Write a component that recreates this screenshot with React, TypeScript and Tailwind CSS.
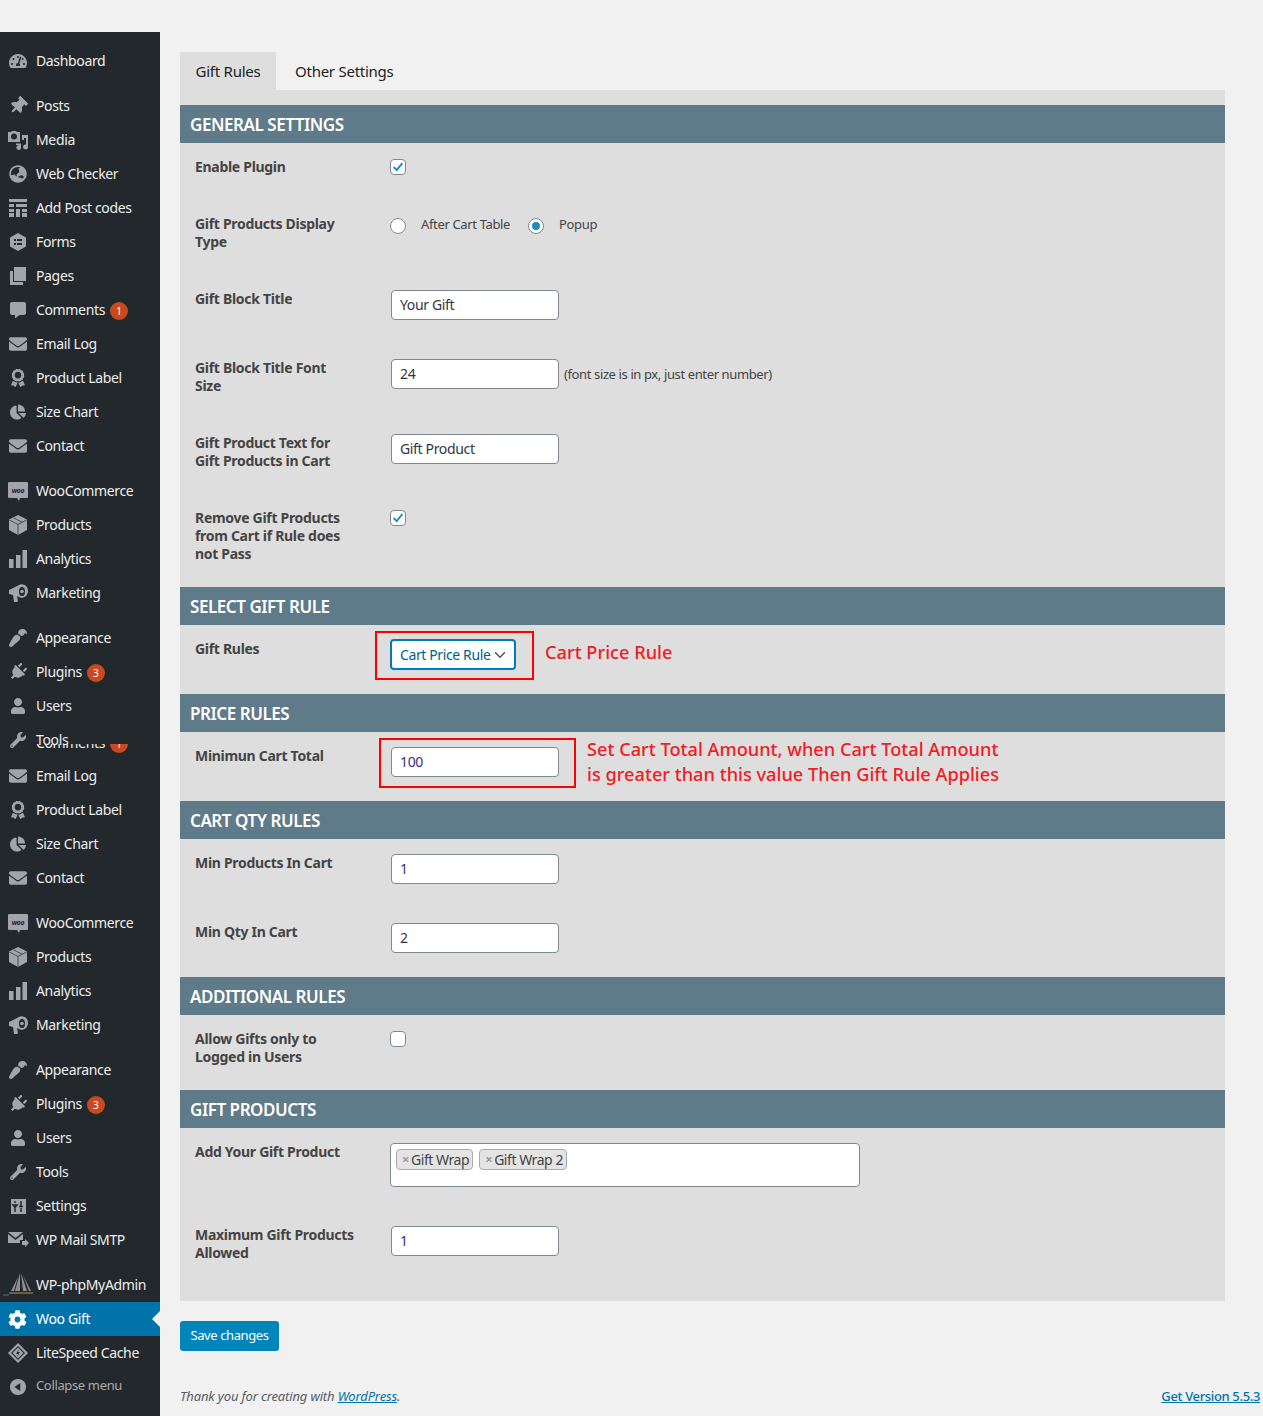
import type { ReactNode } from "react";
import {
  FaTachometerAlt,
  FaThumbtack,
  FaGlobeAsia,
  FaCommentAlt,
  FaEnvelope,
  FaAward,
  FaChartPie,
  FaPaintBrush,
  FaPlug,
  FaUser,
  FaWrench,
  FaCog,
} from "react-icons/fa";
import { ChevronDown } from "lucide-react";

const font = "font-['Noto_Sans','Open_Sans',sans-serif]";

// icons the packages don't have
function MediaIcon() {
  return (
    <svg viewBox="0 0 20 20" className="h-[20px] w-[20px] fill-current">
      <path fillRule="evenodd" d="M0 2h3l1-1h4l1 1h3v10H0zM6 3.500a3 3 0 1 0 0 6 3 3 0 0 0 0-6z" />
      <path d="M14 5h6v12a2.500 2.500 0 1 1-2-2.400V8h-2v2h-2zM8 13.500h5v4a2.300 2.300 0 1 1-2-2.200v-.3H8z" />
    </svg>
  );
}
function TableIcon() {
  return (
    <svg viewBox="0 0 20 20" className="h-[20px] w-[20px] fill-current">
      <path d="M1 1h18v3H1zM1 6h5v3H1zM8 6h11v3H8zM1 11h5v3H1zM1 15h5v4H1zM8 11h4v8H8zM14 11h5v3h-5zM14 15h5v4h-5z" />
    </svg>
  );
}
function FormsIcon() {
  return (
    <svg viewBox="0 0 20 20" className="h-[20px] w-[20px]">
      <path d="M10 1l8 4.500v9L10 19l-8-4.500v-9z" className="fill-current" />
      <path d="M6 7h2v2H6zM9 7h5v2H9zM6 11h2v2H6zM9 11h5v2H9z" fill="#23282d" />
    </svg>
  );
}
function PagesIcon() {
  return (
    <svg viewBox="0 0 20 20" className="h-[20px] w-[20px] fill-current">
      <path d="M6 1h12v14H6z" />
      <path d="M2 5h3v11h10v3H2z" />
    </svg>
  );
}
function WooIcon() {
  return (
    <svg viewBox="0 0 20 20" className="h-[20px] w-[20px]">
      <path d="M1 1h18a1 1 0 0 1 1 1v14a1 1 0 0 1-1 1h-7l-1 3-2-3H1a1 1 0 0 1-1-1V2a1 1 0 0 1 1-1z" className="fill-current" />
      <text x="10" y="11.500" textAnchor="middle" fontSize="7" fontWeight="700" fill="#23282d" fontStyle="italic">
        woo
      </text>
    </svg>
  );
}
function BoxIcon() {
  return (
    <svg viewBox="0 0 20 20" className="h-[20px] w-[20px]">
      <path d="M10 0l9 4.500v10.500L10 20l-9-5V4.500z" className="fill-current" />
      <path d="M1.500 5l8.500 4.500L18.500 5M10 9.500V20M5.500 2.800l8.500 4.400" fill="none" stroke="#23282d" strokeWidth="0.7" />
    </svg>
  );
}
function BarsIcon() {
  return (
    <svg viewBox="0 0 20 20" className="h-[20px] w-[20px] fill-current">
      <path d="M1 10h4.500v9H1zM8 6h4.500v13H8zM14.500 1H19v18h-4.500z" />
    </svg>
  );
}
function MegaphoneIcon() {
  return (
    <svg viewBox="0 0 20 20" className="h-[20px] w-[20px] fill-current">
      <path fillRule="evenodd" d="M1 7l11-5.500a5 6.500 0 0 1 3 0 5 6.500 0 0 1 0 13 5 6.500 0 0 1-3 0L9 13l1 5-1 1H6l-1-7-4-1zM14 4a3 4.500 0 1 0 0 9 3 4.500 0 0 0 0-9z" />
      <circle cx="14" cy="8.500" r="1.800" />
    </svg>
  );
}
function SlidersIcon() {
  return (
    <svg viewBox="0 0 20 20" className="h-[20px] w-[20px]">
      <path d="M3 3h15v15H3z" className="fill-current" />
      <path d="M7 5v2M5 9h4L7 11.500zM7 11v5M13 5v5M11 10.500h4M13 12v4" stroke="#23282d" strokeWidth="1.500" fill="none" />
    </svg>
  );
}
function MailSendIcon() {
  return (
    <svg viewBox="0 0 22 20" className="h-[20px] w-[22px] fill-current">
      <path d="M1 2h15l-7.500 6zM1 4l7.500 6L16 4v6h-3v3H1zM15 11h3V9l4 4-4 4v-2h-3z" />
    </svg>
  );
}
function SailIcon() {
  return (
    <svg viewBox="0 0 30 26" className="h-[26px] w-[30px]">
      <path d="M17 1l-5 18h5zM18 1l2 18h4zM20 3l6 16h2zM15 5l-7 14h3z" fill="#8c8f94" />
      <path d="M6 20h24v2H6z" fill="#6b6040" />
      <path d="M0 22h6v2H0z" fill="#3a4a70" />
    </svg>
  );
}
function DiamondIcon() {
  return (
    <svg viewBox="0 0 20 20" className="h-[20px] w-[20px]">
      <path d="M10 0l10 10-10 10L0 10z" className="fill-current" />
      <path d="M10 3l7 7-7 7-7-7z" fill="#23282d" />
      <path d="M10 4.500l5.500 5.500-5.500 5.500L4.500 10z" className="fill-current" />
      <path d="M11 6l-3 5h2l-1 3 3-5h-2z" fill="#23282d" />
    </svg>
  );
}
function CollapseIcon() {
  return (
    <svg viewBox="0 0 20 20" className="h-[18px] w-[18px]">
      <circle cx="10" cy="10" r="9" className="fill-current" />
      <path d="M12.500 5.500v9L6 10z" fill="#23282d" />
    </svg>
  );
}

function Badge({ n }: { n: number }) {
  return (
    <span className="ml-[5px] mt-[2px] flex h-[18px] w-[18px] items-center justify-center rounded-full bg-[#ca4a1f] text-[10px] leading-none tracking-normal text-white">
      {n}
    </span>
  );
}

function MenuItem({
  icon,
  label,
  badge,
  top = 0,
  active,
  muted,
}: {
  icon: ReactNode;
  label: string;
  badge?: number;
  top?: number;
  active?: boolean;
  muted?: boolean;
}) {
  return (
    <div
      style={{ marginTop: top }}
      className={`relative flex h-[34px] items-center tracking-[-0.35px] ${muted ? "text-[13px] text-[#aaa]" : active ? "bg-[#0073aa] text-[14px] text-white" : "text-[14px] text-[#eee]"}`}
    >
      <span className={`flex w-[36px] shrink-0 items-center justify-center pr-[1px] ${active ? "text-white" : "text-[#a0a5aa]"}`}>
        {icon}
      </span>
      <span className="whitespace-nowrap pb-[2px]">{label}</span>
      {badge ? <Badge n={badge} /> : null}
      {active ? (
        <span className="absolute right-0 top-[9px] h-0 w-0 border-y-[8px] border-r-[8px] border-y-transparent border-r-[#f1f1f1]" />
      ) : null}
    </div>
  );
}

const ic = "h-[18px] w-[18px]";

function Sidebar() {
  return (
    <aside className="w-[160px] shrink-0 bg-[#23282d] pt-[12px]">
      <MenuItem icon={<FaTachometerAlt className={ic} />} label="Dashboard" />
      <MenuItem top={11} icon={<FaThumbtack className={`${ic} rotate-45`} />} label="Posts" />
      <MenuItem icon={<MediaIcon />} label="Media" />
      <MenuItem icon={<FaGlobeAsia className={ic} />} label="Web Checker" />
      <MenuItem icon={<TableIcon />} label="Add Post codes" />
      <MenuItem icon={<FormsIcon />} label="Forms" />
      <MenuItem icon={<PagesIcon />} label="Pages" />
      <MenuItem icon={<FaCommentAlt className="h-[16px] w-[16px]" />} label="Comments" badge={1} />
      <MenuItem icon={<FaEnvelope className={ic} />} label="Email Log" />
      <MenuItem icon={<FaAward className={ic} />} label="Product Label" />
      <MenuItem icon={<FaChartPie className="h-[16px] w-[16px]" />} label="Size Chart" />
      <MenuItem icon={<FaEnvelope className={ic} />} label="Contact" />
      <MenuItem top={11} icon={<WooIcon />} label="WooCommerce" />
      <MenuItem icon={<BoxIcon />} label="Products" />
      <MenuItem icon={<BarsIcon />} label="Analytics" />
      <MenuItem icon={<MegaphoneIcon />} label="Marketing" />
      <MenuItem top={11} icon={<FaPaintBrush className={`${ic} rotate-180`} />} label="Appearance" />
      <MenuItem icon={<FaPlug className={`${ic} rotate-45`} />} label="Plugins" badge={3} />
      <MenuItem icon={<FaUser className="h-[16px] w-[16px]" />} label="Users" />
      <div className="relative">
        <MenuItem icon={<FaWrench className="h-[16px] w-[16px]" />} label="Tools" />
        {/* screenshot seam: bottom of the Comments row shows under Tools */}
        <div className="absolute left-0 top-[21px] h-[9px] w-full overflow-hidden">
          <div className="-mt-[18px]">
            <MenuItem icon={null} label="Comments" badge={1} />
          </div>
        </div>
      </div>
      <MenuItem top={2} icon={<FaEnvelope className={ic} />} label="Email Log" />
      <MenuItem icon={<FaAward className={ic} />} label="Product Label" />
      <MenuItem icon={<FaChartPie className="h-[16px] w-[16px]" />} label="Size Chart" />
      <MenuItem icon={<FaEnvelope className={ic} />} label="Contact" />
      <MenuItem top={11} icon={<WooIcon />} label="WooCommerce" />
      <MenuItem icon={<BoxIcon />} label="Products" />
      <MenuItem icon={<BarsIcon />} label="Analytics" />
      <MenuItem icon={<MegaphoneIcon />} label="Marketing" />
      <MenuItem top={11} icon={<FaPaintBrush className={`${ic} rotate-180`} />} label="Appearance" />
      <MenuItem icon={<FaPlug className={`${ic} rotate-45`} />} label="Plugins" badge={3} />
      <MenuItem icon={<FaUser className="h-[16px] w-[16px]" />} label="Users" />
      <MenuItem icon={<FaWrench className="h-[16px] w-[16px]" />} label="Tools" />
      <MenuItem icon={<SlidersIcon />} label="Settings" />
      <MenuItem icon={<MailSendIcon />} label="WP Mail SMTP" />
      <MenuItem top={11} icon={<SailIcon />} label="WP-phpMyAdmin" />
      <MenuItem active icon={<FaCog className="h-[19px] w-[19px]" />} label="Woo Gift" />
      <MenuItem icon={<DiamondIcon />} label="LiteSpeed Cache" />
      <MenuItem muted icon={<CollapseIcon />} label="Collapse menu" />
    </aside>
  );
}

function SectionHead({ title }: { title: string }) {
  return (
    <div className="flex h-[38px] items-center bg-[#5f7a88] pl-[10px] pt-[2px] text-[17px] font-semibold tracking-[-0.45px] text-white">
      {title}
    </div>
  );
}

function Row({ label, children }: { label: ReactNode; children?: ReactNode }) {
  return (
    <div className="relative flex pb-[24px] pt-[15px]">
      <div className="w-[210px] shrink-0 pl-[15px] pr-[35px] text-[14px] font-bold leading-[18px] tracking-[-0.3px] text-[#444]">{label}</div>
      <div className="min-w-0 flex-1">{children}</div>
    </div>
  );
}

function TextInput({ value, purple }: { value: string; purple?: boolean }) {
  return (
    <input
      readOnly
      value={value}
      className={`ml-[1px] block h-[30px] w-[168px] rounded-[4px] border border-[#7e8993] bg-white px-[8px] pb-[2px] text-[14px] tracking-[-0.35px] outline-none ${purple ? "text-[#3d2f78]" : "text-[#32373c]"}`}
    />
  );
}

function Checkbox({ checked }: { checked?: boolean }) {
  return (
    <span className="mt-[1px] flex h-[16px] w-[16px] items-center justify-center rounded-[4px] border border-[#7e8993] bg-white">
      {checked ? (
        <svg viewBox="0 0 16 16" className="h-[14px] w-[14px]">
          <path d="M3 8l3.500 3.500L13 3.500" fill="none" stroke="#1e8cbe" strokeWidth="2.200" />
        </svg>
      ) : null}
    </span>
  );
}

function Radio({ checked }: { checked?: boolean }) {
  return (
    <span className="flex h-[16px] w-[16px] shrink-0 items-center justify-center rounded-full border border-[#7e8993] bg-white">
      {checked ? <span className="h-[8px] w-[8px] rounded-full bg-[#1e8cbe]" /> : null}
    </span>
  );
}

function Tag({ label }: { label: string }) {
  return (
    <span className="flex h-[21px] items-center rounded-[4px] border border-[#aaa] bg-[#e4e4e4] pl-[5px] pr-[3px] text-[14px] tracking-[-0.45px] text-[#444]">
      <span className="mr-[2px] text-[13px] font-bold text-[#999]">×</span>
      {label}
    </span>
  );
}

function Note({ children }: { children: ReactNode }) {
  return <div className="whitespace-nowrap text-[18.200px] font-medium leading-[25px] text-[#ee1c25]">{children}</div>;
}

export default function App() {
  return (
    <div className={`flex min-h-[1416px] bg-[#f1f1f1] pt-[32px] ${font}`}>
      <Sidebar />
      <main className="w-[1085px] pl-[20px] pr-[20px] pt-[20px]">
        <div className="flex h-[38px] items-center text-[15px] tracking-[-0.25px] text-[#222]">
          <div className="flex h-full w-[96px] items-center justify-center bg-[#dedede]">Gift Rules</div>
          <div className="ml-[19px]">Other Settings</div>
        </div>
        <div className="bg-[#dedede] pb-[15px] pt-[15px]">
          <SectionHead title="GENERAL SETTINGS" />
          <Row label="Enable Plugin">
            <Checkbox checked />
          </Row>
          <Row label="Gift Products Display Type">
            <div className="mt-[3px] flex h-[16px] items-center text-[13px] tracking-[-0.35px] text-[#444]">
              <Radio />
              <span className="-mt-[3px] ml-[15px]">After Cart Table</span>
              <span className="ml-[18px]">
                <Radio checked />
              </span>
              <span className="-mt-[3px] ml-[15px]">Popup</span>
            </div>
          </Row>
          <Row label="Gift Block Title">
            <TextInput value="Your Gift" />
          </Row>
          <Row label="Gift Block Title Font Size">
            <div className="flex items-center">
              <TextInput value="24" />
              <span className="ml-[5px] mt-[1px] text-[13px] tracking-[-0.38px] text-[#444]">(font size is in px, just enter number)</span>
            </div>
          </Row>
          <Row label="Gift Product Text for Gift Products in Cart">
            <TextInput value="Gift Product" />
          </Row>
          <Row label="Remove Gift Products from Cart if Rule does not Pass">
            <Checkbox checked />
          </Row>
          <SectionHead title="SELECT GIFT RULE" />
          <Row label="Gift Rules">
            <div className="-mt-[1px] flex h-[31px] w-[126px] items-center justify-between rounded-[4px] border-2 border-[#007cba] bg-white pl-[8px] pr-[5px] text-[14px] tracking-[-0.38px] text-[#016087]">
              <span className="whitespace-nowrap">Cart Price Rule</span>
              <ChevronDown size={18} strokeWidth={2} className="shrink-0 text-[#555]" />
            </div>
            {/* red annotation drawn over the form */}
            <div className="absolute left-[195px] top-[6px] h-[49px] w-[159px] border-2 border-[#ff0000]" />
            <div className="absolute left-[365px] top-[15px]">
              <Note>Cart Price Rule</Note>
            </div>
          </Row>
          <SectionHead title="PRICE RULES" />
          <Row label="Minimun Cart Total">
            <TextInput value="100" purple />
            <div className="absolute left-[199px] top-[6px] h-[50px] w-[197px] border-2 border-[#ff0000]" />
            <div className="absolute left-[407px] top-[5px]">
              <Note>Set Cart Total Amount, when Cart Total Amount</Note>
              <Note>is greater than this value Then Gift Rule Applies</Note>
            </div>
          </Row>
          <SectionHead title="CART QTY RULES" />
          <Row label="Min Products In Cart">
            <TextInput value="1" purple />
          </Row>
          <Row label="Min Qty In Cart">
            <TextInput value="2" />
          </Row>
          <SectionHead title="ADDITIONAL RULES" />
          <Row label="Allow Gifts only to Logged in Users">
            <Checkbox />
          </Row>
          <SectionHead title="GIFT PRODUCTS" />
          <Row label="Add Your Gift Product">
            <div className="flex h-[44px] w-[470px] items-start gap-[6px] rounded-[4px] border border-[#7e8993] bg-white pl-[5px] pt-[5px]">
              <Tag label="Gift Wrap" />
              <Tag label="Gift Wrap 2" />
            </div>
          </Row>
          <Row label="Maximum Gift Products Allowed">
            <TextInput value="1" purple />
          </Row>
        </div>
        <button className="mt-[20px] flex h-[30px] w-[99px] items-center justify-center rounded-[3px] bg-[#0085ba] text-[13px] tracking-[-0.4px] text-white">
          Save changes
        </button>
        <div className="mt-[36px] flex w-[1080px] items-center justify-between text-[13px] tracking-[-0.15px] text-[#555d66]">
          <span className="italic">
            Thank you for creating with <a className="text-[#0073aa] underline">WordPress</a>.
          </span>
          <a className="font-medium tracking-[-0.35px] text-[#0073aa] underline">Get Version 5.5.3</a>
        </div>
      </main>
    </div>
  );
}
